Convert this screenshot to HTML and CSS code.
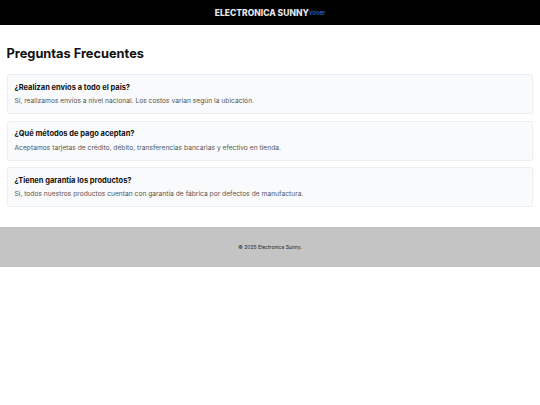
FILE: index.html
```html
<!DOCTYPE html>
<html lang="es">
<head>
<meta charset="utf-8">
<title>Preguntas Frecuentes</title>
<link rel="stylesheet" href="styles.css">
</head>
<body>
<header class="topbar">
  <span class="brand">ELECTRONICA SUNNY</span>
  <a class="back" href="#">Volver</a>
</header>
<main class="content">
  <h1 class="title">Preguntas Frecuentes</h1>
  <div class="faq">
    <div class="card">
      <h2 class="q">¿Realizan envios a todo el pais?</h2>
      <p class="a">Sí, realizamos envíos a nivel nacional. Los costos varían según la ubicación.</p>
    </div>
    <div class="card">
      <h2 class="q">¿Qué métodos de pago aceptan?</h2>
      <p class="a">Aceptamos tarjetas de crédito, débito, transferencias bancarias y efectivo en tienda.</p>
    </div>
    <div class="card">
      <h2 class="q">¿Tienen garantía los productos?</h2>
      <p class="a">Sí, todos nuestros productos cuentan con garantía de fábrica por defectos de manufactura.</p>
    </div>
  </div>
</main>
<footer class="footer">
  <p class="copy">© 2025 Electronica Sunny.</p>
</footer>
</body>
</html>
```

FILE: styles.css
```css
* { box-sizing: border-box; }
html, body { margin: 0; padding: 0; background: #ffffff; }
body { font-family: Inter, "Noto Sans", "Liberation Sans", sans-serif; color: #111; }

.topbar {
  height: 25px;
  background: #000;
  display: flex;
  align-items: center;
  justify-content: center;
  gap: 0;
}
.brand { color: #e5e5e5; font-weight: 800; font-size: 8.5px; }
.back { color: #3b82f6; font-size: 5.5px; text-decoration: none; padding-top: 1px; }

.content { padding: 20.5px 7px 20px 6.5px; }
.title { margin: 0 0 12.5px; font-size: 12.8px; line-height: 16px; font-weight: 700; color: #111; }

.faq { display: flex; flex-direction: column; gap: 6.5px; }
.card {
  background: #f9fafb;
  border: 1px solid #eceef1;
  border-radius: 2px;
  padding: 7.5px 7px 0;
  height: 40px;
}
.q { margin: 0 0 5.5px; font-size: 7.5px; line-height: 9px; font-weight: 700; color: #111; }
.a { margin: 0; font-size: 6.7px; line-height: 8px; color: #555; }

.footer {
  background: #c4c4c4;
  height: 40px;
  display: flex;
  align-items: center;
  justify-content: center;
}
.copy { margin: 0; font-size: 5px; color: #222; }
```
